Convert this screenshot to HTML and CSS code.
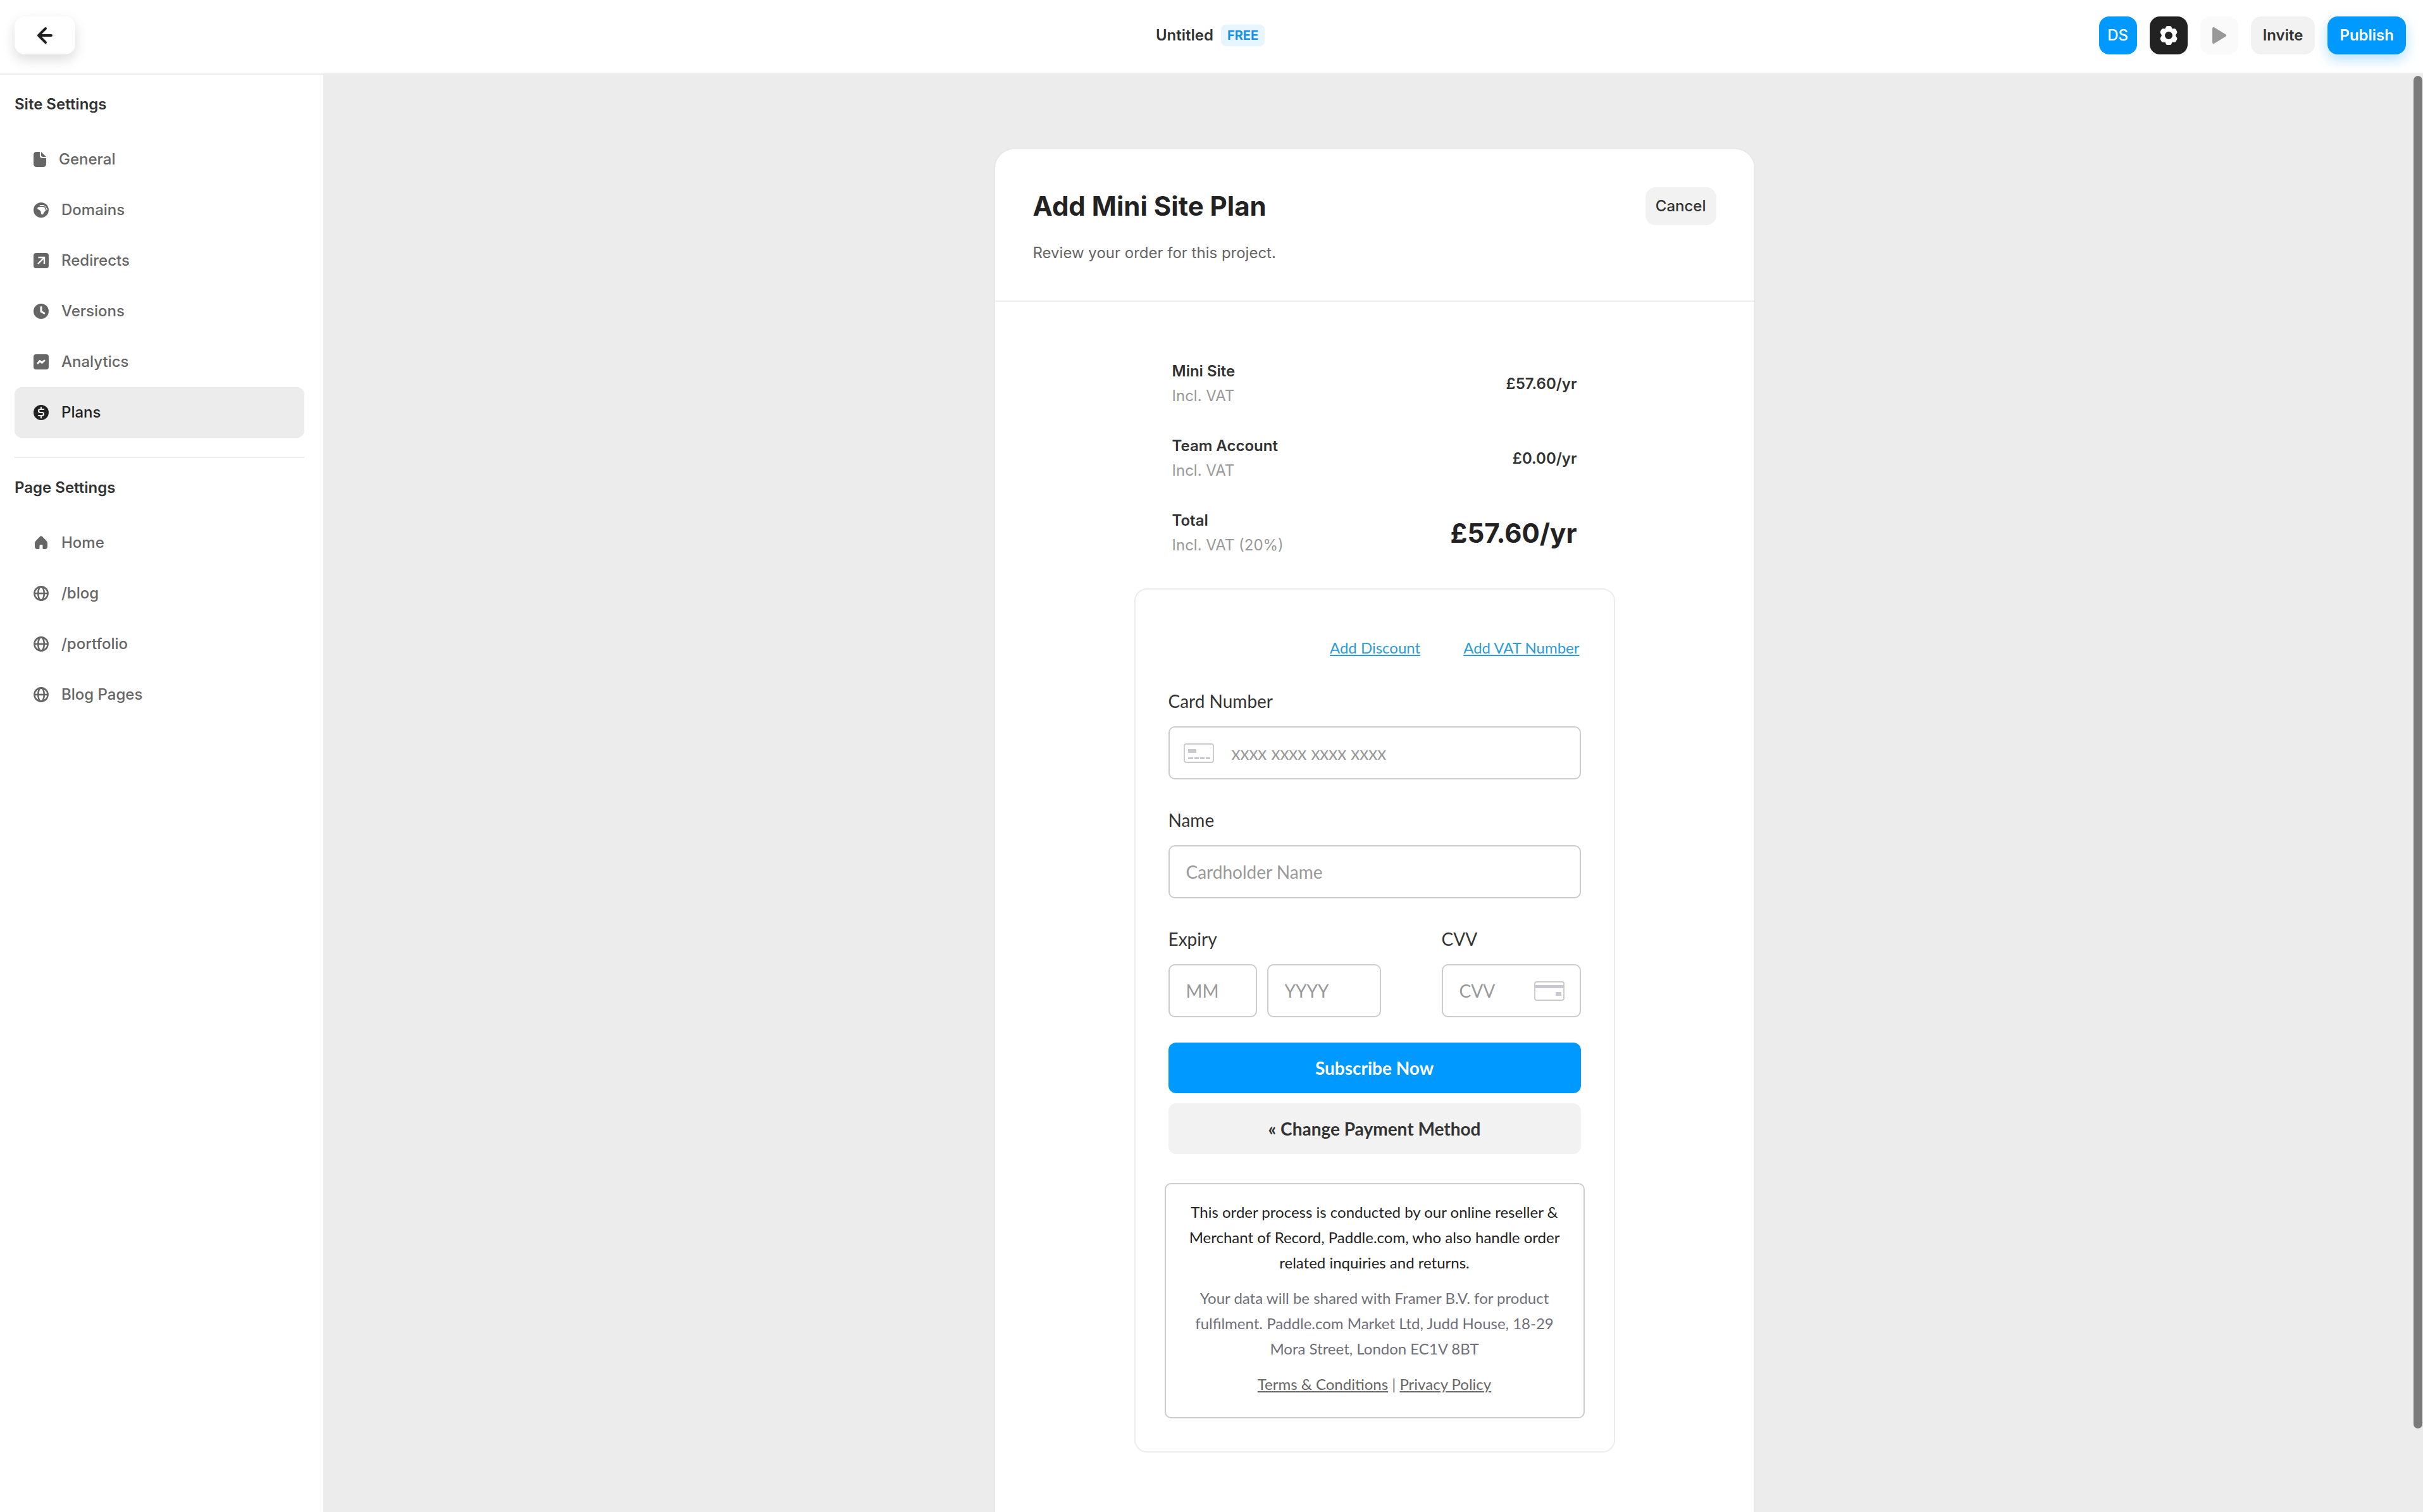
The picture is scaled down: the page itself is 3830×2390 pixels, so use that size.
FILE: index.html
```html
<!DOCTYPE html>
<html lang="en">
<head>
    <meta charset="UTF-8">
    <meta name="viewport" content="width=device-width, initial-scale=1.0">
    <title>Untitled - Site Settings</title>
    <link rel="stylesheet" href="styles.css">
</head>
<body>
    <!-- shared globe icon -->
    <svg class="defs" aria-hidden="true">
        <symbol id="globe" viewBox="0 0 24 24">
            <g fill="none" stroke="currentColor" stroke-width="2.6">
                <circle cx="12" cy="12" r="10.6"/>
                <ellipse cx="12" cy="12" rx="4.8" ry="10.6"/>
                <path d="M1.5 12h21"/>
            </g>
        </symbol>
    </svg>

    <header class="topbar">
        <div class="topbar-left">
            <button class="back" aria-label="Back">
                <svg width="26" height="28" viewBox="0 0 26 28" fill="none" stroke="currentColor" stroke-width="4" stroke-linecap="round" stroke-linejoin="round"><path d="M14 3 3 14l11 11M3 14h20"/></svg>
            </button>
        </div>
        <div class="topbar-title">
            <span class="project">Untitled</span>
            <span class="badge">FREE</span>
        </div>
        <div class="topbar-right">
            <button class="btn btn-square btn-user">DS</button>
            <button class="btn btn-square btn-dark" aria-label="Settings">
                <svg width="30" height="32" viewBox="0 0 30 32"><path fill="#fff" stroke="#fff" stroke-width="2" stroke-linejoin="round" fill-rule="evenodd" d="M13 2h4q1 0 1.500 1l1 2.500q.5 1 1.500 1l3-.3q1 0 1.500.8l1.700 3q.5 1 0 1.700l-1.700 2.800q-.6 1.500 0 3l1.700 2.800q.5.800 0 1.700l-1.700 3q-.5.800-1.500.8l-3-.3q-1 0-1.500 1l-1 2.500q-.5 1-1.500 1h-4q-1 0-1.500-1l-1-2.500q-.5-1-1.500-1l-3 .3q-1 0-1.500-.8l-1.700-3q-.5-.9 0-1.700l1.700-2.800q.6-1.500 0-3l-1.700-2.800q-.5-.7 0-1.700l1.700-3q.5-.8 1.500-.8l3 .3q1 0 1.500-1l1-2.500q.5-1 1.500-1zM15 9a7 7 0 1 0 0 14a7 7 0 1 0 0-14z"/></svg>
            </button>
            <button class="btn btn-square btn-play" aria-label="Preview">
                <svg width="24" height="28" viewBox="0 0 24 28"><path fill="#999" stroke="#999" stroke-width="4" stroke-linejoin="round" d="M3 3v22l18-11z"/></svg>
            </button>
            <button class="btn">Invite</button>
            <button class="btn btn-publish">Publish</button>
        </div>
    </header>

    <div class="layout">
        <nav class="sidebar">
            <h2>Site Settings</h2>
            <ul>
                <li><a href="#">
                    <svg width="20" height="24" viewBox="0 0 20 24" fill="currentColor"><path d="M10 0H5Q0 0 0 5v14q0 5 5 5h10q5 0 5-5V10h-6q-4 0-4-4zM12 0v5q0 3 3 3h5z"/></svg>
                    General</a></li>
                <li><a href="#">
                    <svg width="24" height="24" viewBox="0 0 24 24"><circle cx="12" cy="12" r="12" fill="currentColor"/><path fill="#fff" d="M10 4h5.500q5.500 2.500 6.500 8.500l-1.500-1-1.500-4-2-1.500.5 2.500 2 4-2.500 2.500-1.500 3q-1.500 2-3.500.3l-.5-4.300-2.500-2.200-2.600-1.300q-.8-2.500 1.600-3.300l5-.2 4.500.6-.5-1.600-5-.3-2.500-.4z"/></svg>
                    Domains</a></li>
                <li><a href="#">
                    <svg width="24" height="24" viewBox="0 0 24 24"><rect width="24" height="24" rx="4" fill="currentColor"/><path d="M7 17 16.500 7.500M7.500 7H17v10" fill="none" stroke="#fff" stroke-width="2.400"/></svg>
                    Redirects</a></li>
                <li><a href="#">
                    <svg width="24" height="24" viewBox="0 0 24 24"><circle cx="12" cy="12" r="12" fill="currentColor"/><path d="M12 5.500v7l4.800 2.500" fill="none" stroke="#fff" stroke-width="3" stroke-linecap="round" stroke-linejoin="round"/></svg>
                    Versions</a></li>
                <li><a href="#">
                    <svg width="24" height="24" viewBox="0 0 24 24"><rect width="24" height="24" rx="4" fill="currentColor"/><path d="M7 14l3-3.500 3.200 3L17 10" fill="none" stroke="#fff" stroke-width="3" stroke-linecap="round" stroke-linejoin="round"/></svg>
                    Analytics</a></li>
                <li><a href="#" class="active">
                    <svg width="24" height="24" viewBox="0 0 24 24"><circle cx="12" cy="12" r="12" fill="currentColor"/><path d="M16 7H10.500q-2.500 0-2.500 2.500t2.500 2.500h3q2.500 0 2.500 2.500T13.500 17H8M12 4v3M12 17v3.500" fill="none" stroke="#ececec" stroke-width="2.200" stroke-linecap="round"/></svg>
                    Plans</a></li>
            </ul>
            <hr>
            <h2>Page Settings</h2>
            <ul>
                <li><a href="#">
                    <svg width="24" height="24" viewBox="0 0 24 24"><path fill="currentColor" d="M10 2.200q2-1.700 4 0l6.500 6.800q1.500 1.600 1.500 3.500V18q0 4-4 4h-2q-1.500 0-1.500-1.500V16.500q0-1.500-1.500-1.500h-2q-1.500 0-1.500 1.500v4q0 1.500-1.500 1.500H6q-4 0-4-4v-5.500q0-1.900 1.500-3.500z"/></svg>
                    Home</a></li>
                <li><a href="#"><svg width="24" height="24"><use href="#globe"/></svg>/blog</a></li>
                <li><a href="#"><svg width="24" height="24"><use href="#globe"/></svg>/portfolio</a></li>
                <li><a href="#"><svg width="24" height="24"><use href="#globe"/></svg>Blog Pages</a></li>
            </ul>
        </nav>

        <main class="content">
            <section class="sheet">
                <div class="sheet-header">
                    <div class="sheet-heading">
                        <h1>Add Mini Site Plan</h1>
                        <button class="btn btn-cancel">Cancel</button>
                    </div>
                    <p>Review your order for this project.</p>
                </div>

                <div class="sheet-body">
                    <table class="summary">
                        <tr>
                            <th scope="row">Mini Site<small>Incl. VAT</small></th>
                            <td>£57.60/yr</td>
                        </tr>
                        <tr>
                            <th scope="row">Team Account<small>Incl. VAT</small></th>
                            <td>£0.00/yr</td>
                        </tr>
                        <tr>
                            <th scope="row">Total<small>Incl. VAT (20%)</small></th>
                            <td class="total">£57.60/yr</td>
                        </tr>
                    </table>

                    <form class="checkout">
                        <div class="extras">
                            <a href="#">Add Discount</a>
                            <a href="#">Add VAT Number</a>
                        </div>

                        <div class="field">
                            <label for="card">Card Number</label>
                            <div class="input input-card">
                                <svg width="48" height="31" viewBox="0 0 48 31"><rect x="1" y="1" width="46" height="29" rx="3" fill="none" stroke="#ccc" stroke-width="2"/><path fill="#c9c9ce" d="M7 9h13v6H7zM7 22h8v3H7zM17 22h7v3h-7zM26 22h7v3h-7zM35 22h7v3h-7z"/></svg>
                                <input type="text" id="card" placeholder="xxxx xxxx xxxx xxxx">
                            </div>
                        </div>

                        <div class="field">
                            <label for="name">Name</label>
                            <div class="input">
                                <input type="text" id="name" placeholder="Cardholder Name">
                            </div>
                        </div>

                        <div class="field-row">
                            <div class="field expiry">
                                <label for="month">Expiry</label>
                                <div class="expiry-inputs">
                                    <div class="input input-month"><input type="text" id="month" placeholder="MM"></div>
                                    <div class="input input-year"><input type="text" id="year" aria-label="Expiry year" placeholder="YYYY"></div>
                                </div>
                            </div>
                            <div class="field cvv">
                                <label for="cvv">CVV</label>
                                <div class="input input-cvv">
                                    <input type="text" id="cvv" placeholder="CVV">
                                    <svg width="48" height="31" viewBox="0 0 48 31"><rect x="1" y="1" width="46" height="29" rx="3" fill="none" stroke="#ccc" stroke-width="2"/><path fill="#c9c9d2" d="M1 6h46v5H1zM34 17h9v6h-9z"/></svg>
                                </div>
                            </div>
                        </div>

                        <button type="button" class="submit">Subscribe Now</button>
                        <button type="button" class="submit submit-alt">« Change Payment Method</button>

                        <div class="notice">
                            <p class="dark">This order process is conducted by our online reseller &amp; Merchant of Record, Paddle.com, who also handle order related inquiries and returns.</p>
                            <p>Your data will be shared with Framer B.V. for product fulfilment. Paddle.com Market Ltd, Judd House, 18-29 Mora Street, London EC1V 8BT</p>
                            <p><a href="#">Terms &amp; Conditions</a> | <a href="#">Privacy Policy</a></p>
                        </div>
                    </form>
                </div>
            </section>
            <div class="scrollbar"></div>
        </main>
    </div>
</body>
</html>
```
FILE: styles.css
```css
* {
    box-sizing: border-box;
    margin: 0;
    padding: 0;
}

body {
    display: flex;
    flex-direction: column;
    height: 100vh;
    overflow: hidden;
    background-color: #fff;
    color: #333;
    font-family: Inter, Roboto, sans-serif;
    font-size: 24px;
    line-height: 32px;
}

button, input {
    font: inherit;
    color: inherit;
    border: none;
}

button {
    cursor: pointer;
}

svg {
    display: block;
    flex-shrink: 0;
}

.defs {
    display: none;
}

/* Top bar */
.topbar {
    display: grid;
    grid-template-columns: 1fr auto 1fr;
    padding: 26px 27px 30px 23px;
}

.topbar-left, .topbar-title, .topbar-right {
    display: flex;
    align-items: center;
}

.topbar-right {
    justify-content: flex-end;
    gap: 20px;
}

.topbar-title {
    gap: 12px;
}

.project {
    font-weight: 600;
}

.badge {
    padding: 1px 10px;
    border-radius: 8px;
    background-color: #e6f5ff;
    color: #1992e5;
    font-size: 20px;
    font-weight: 700;
}

.back {
    display: flex;
    align-items: center;
    justify-content: center;
    width: 96px;
    height: 60px;
    border-radius: 16px;
    background-color: #fff;
    color: #222;
    box-shadow: 0 8px 20px rgba(0, 0, 0, 0.14);
}

.btn {
    display: flex;
    align-items: center;
    justify-content: center;
    height: 60px;
    padding: 0 19px;
    border-radius: 16px;
    background-color: #f2f2f2;
    font-weight: 600;
}

.btn-square {
    width: 60px;
    padding: 0;
}

.btn-user {
    background-color: #09f;
    color: #fff;
    font-weight: 500;
}

.btn-dark {
    background-color: #222;
}

.btn-play {
    background-color: #fafafa;
}

.btn-publish {
    background-color: #09f;
    color: #fff;
    box-shadow: 0 8px 20px rgba(0, 153, 255, 0.3);
}

.btn-cancel {
    padding: 0 16px;
    font-weight: 500;
}

/* Sidebar */
.layout {
    display: flex;
    flex: 1;
    min-height: 0;
    background-color: #ececec;
}

.sidebar {
    flex-shrink: 0;
    width: 511px;
    margin-top: 2px;
    padding: 0 30px 0 23px;
    background-color: #fff;
}

.sidebar h2 {
    margin: 31px 0;
    font-size: 24px;
    font-weight: 600;
}

.sidebar ul {
    list-style: none;
}

.sidebar a {
    display: flex;
    align-items: center;
    gap: 20px;
    height: 80px;
    padding: 0 30px;
    border-radius: 12px;
    color: #666;
    font-weight: 500;
    text-decoration: none;
}

.sidebar a.active {
    background-color: #ececec;
    color: #222;
}

.sidebar hr {
    margin-top: 30px;
    border: none;
    border-top: 2px solid #ececec;
}

/* Content */
.content {
    position: relative;
    flex: 1;
    padding: 120px 24px 0 28px;
    overflow: hidden;
}

.scrollbar {
    position: absolute;
    top: 4px;
    right: 1px;
    width: 14px;
    height: 94%;
    border-radius: 7px;
    background-color: #7a7a7a;
}

.sheet {
    max-width: 1200px;
    min-height: 100%;
    margin: 0 auto;
    border-radius: 30px;
    background-color: #fff;
    box-shadow: 0 0 4px rgba(0, 0, 0, 0.06);
}

.sheet-header {
    padding: 60px 60px 59px;
    border-bottom: 2px solid #ececec;
}

.sheet-heading {
    display: flex;
    align-items: center;
    justify-content: space-between;
    margin-bottom: 28px;
}

h1 {
    color: #222;
    font-size: 42px;
    font-weight: 700;
    line-height: 60px;
}

.sheet-header p {
    color: #666;
}

.sheet-body {
    display: flex;
    flex-direction: column;
    align-items: center;
    gap: 29px;
    padding: 70px 20px 200px;
}

.summary {
    width: 100%;
    max-width: 640px;
    border-collapse: collapse;
    line-height: 39px;
}

.summary th, .summary td {
    padding: 20px 0;
    font-weight: 600;
}

.summary th {
    text-align: left;
}

.summary small {
    display: block;
    color: #999;
    font-size: 24px;
    font-weight: 400;
}

.summary td {
    text-align: right;
}

.summary .total {
    color: #222;
    font-size: 42px;
    font-weight: 700;
}

/* Checkout form */
.checkout {
    display: flex;
    flex-direction: column;
    width: 100%;
    max-width: 760px;
    padding: 76px 52px 52px;
    border: 2px solid #ececec;
    border-radius: 20px;
    font-family: Lato, sans-serif;
}

.extras {
    display: flex;
    justify-content: flex-end;
    gap: 68px;
    margin-bottom: 52px;
    padding-right: 2px;
}

.extras a {
    color: #2d9cdb;
}

.field {
    margin-bottom: 48px;
    font-size: 28px;
}

.field label {
    display: block;
    margin-bottom: 24px;
}

.input {
    display: flex;
    align-items: center;
    gap: 28px;
    height: 84px;
    padding: 0 26px;
    border: 2px solid #ccc;
    border-radius: 10px;
}

.input input {
    flex: 1;
    width: 100%;
    min-width: 0;
    background: none;
    outline: none;
}

.input input::placeholder {
    color: #999;
}

.input-card {
    padding: 0 22px;
}

.input-cvv {
    gap: 10px;
    padding-right: 24px;
}

.field-row {
    display: flex;
    justify-content: space-between;
}

.field-row .field {
    margin-bottom: 40px;
}

.expiry-inputs {
    display: flex;
    gap: 16px;
}

.input-month {
    width: 140px;
}

.input-year {
    width: 180px;
}

.cvv {
    width: 220px;
}

.submit {
    height: 80px;
    margin-bottom: 16px;
    border-radius: 12px;
    background-color: #09f;
    color: #fff;
    font-size: 28px;
    font-weight: 700;
}

.submit-alt {
    margin-bottom: 46px;
    background-color: #f2f2f2;
    color: #333;
}

.notice {
    margin: 0 -6px;
    padding: 24px 32px 32px;
    border: 2px solid #ccc;
    border-radius: 10px;
    color: #6f6f7a;
    line-height: 40px;
    text-align: center;
}

.notice p + p {
    margin-top: 16px;
}

.notice .dark {
    color: #222;
}

.notice a {
    color: #666;
}
```
